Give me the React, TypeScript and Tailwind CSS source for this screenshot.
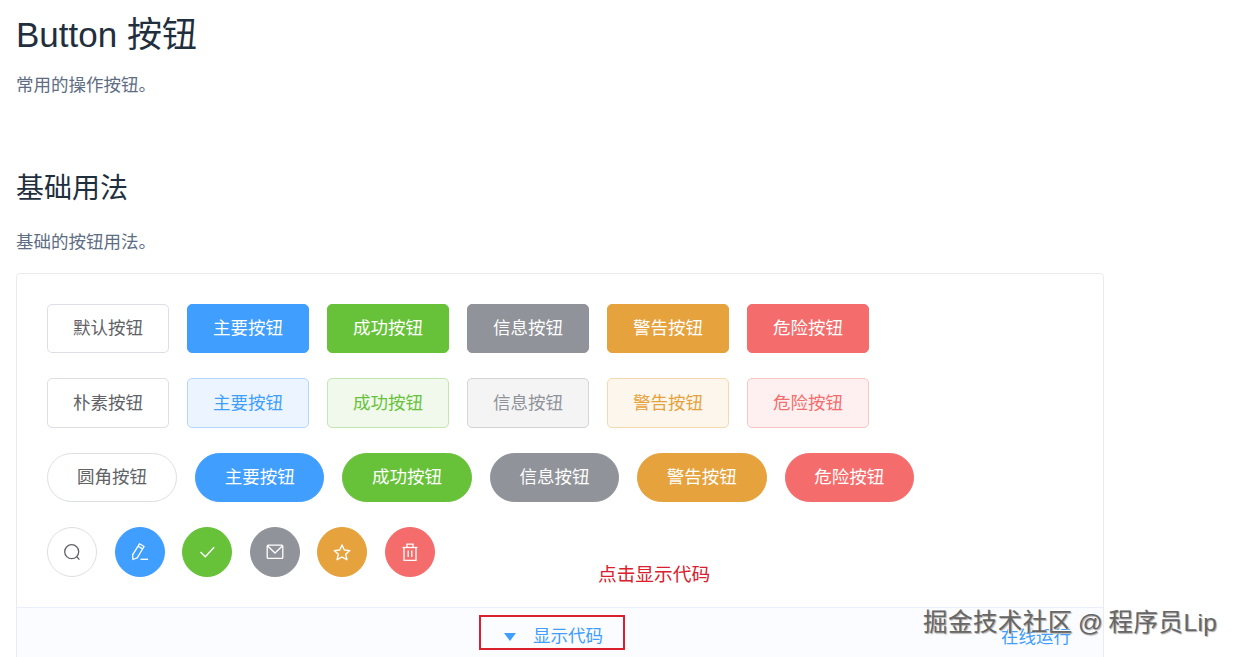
import type { ReactNode } from 'react'

const font = "font-['Liberation_Sans','Noto_Sans_CJK_SC',sans-serif]"

const base =
  'flex items-center justify-center border pt-px text-[17.5px] leading-none'

const solid = [
  { label: '主要按钮', cls: 'border-[#409eff] bg-[#409eff] text-white' },
  { label: '成功按钮', cls: 'border-[#67c23a] bg-[#67c23a] text-white' },
  { label: '信息按钮', cls: 'border-[#909399] bg-[#909399] text-white' },
  { label: '警告按钮', cls: 'border-[#e6a23c] bg-[#e6a23c] text-white' },
  { label: '危险按钮', cls: 'border-[#f56c6c] bg-[#f56c6c] text-white' },
]

const plain = [
  { label: '主要按钮', cls: 'border-[#b3d8ff] bg-[#ecf5ff] text-[#409eff]' },
  { label: '成功按钮', cls: 'border-[#c2e7b0] bg-[#f0f9eb] text-[#67c23a]' },
  { label: '信息按钮', cls: 'border-[#d3d4d6] bg-[#f4f4f5] text-[#909399]' },
  { label: '警告按钮', cls: 'border-[#f5dab1] bg-[#fdf6ec] text-[#e6a23c]' },
  { label: '危险按钮', cls: 'border-[#fbc4c4] bg-[#fef0f0] text-[#f56c6c]' },
]

function Circle({ cls, children }: { cls: string; children: ReactNode }) {
  return (
    <div className={`flex h-[50px] w-[50px] items-center justify-center rounded-full border ${cls}`}>
      {children}
    </div>
  )
}

export default function App() {
  return (
    <div className={`relative h-[657px] w-[1240px] overflow-hidden bg-white pl-4 ${font}`}>
      {/* Page Header */}
      <h1 className="pt-[14px] text-[35px] leading-[42px] font-normal text-[#1f2f3d]">Button 按钮</h1>
      <p className="mt-[17px] text-[17.5px] leading-[24px] text-[#5e6d82]">常用的操作按钮。</p>
      <h2 className="mt-[74px] text-[28px] leading-[36px] font-normal text-[#1f2f3d]">基础用法</h2>
      <p className="mt-[23px] text-[17.5px] leading-[24px] text-[#5e6d82]">基础的按钮用法。</p>

      {/* Demo card */}
      <div className="mt-[19px] w-[1088px] rounded-[4px] border border-[#ebebeb]">
        <div className="flex flex-col gap-[25px] px-[30px] pt-[30px] pb-[30px]">
          <div className="flex gap-[18px]">
            <div className={`${base} h-[49px] w-[122px] rounded-[5px] border-[#dcdfe6] bg-white text-[#606266]`}>默认按钮</div>
            {solid.map((b) => (
              <div key={b.label} className={`${base} h-[49px] w-[122px] rounded-[5px] ${b.cls}`}>{b.label}</div>
            ))}
          </div>
          <div className="flex gap-[18px]">
            <div className={`${base} h-[50px] w-[122px] rounded-[5px] border-[#dcdfe6] bg-white text-[#606266]`}>朴素按钮</div>
            {plain.map((b) => (
              <div key={b.label} className={`${base} h-[50px] w-[122px] rounded-[5px] ${b.cls}`}>{b.label}</div>
            ))}
          </div>
          <div className="flex gap-[18px]">
            <div className={`${base} h-[49px] w-[130px] rounded-[25px] border-[#dcdfe6] bg-white text-[#606266]`}>圆角按钮</div>
            {solid.map((b) => (
              <div key={b.label} className={`${base} h-[49px] w-[129.4px] rounded-[25px] ${b.cls}`}>{b.label}</div>
            ))}
          </div>
          <div className="flex gap-[17.5px]">
            <Circle cls="border-[#dcdfe6] bg-white">
              <svg width="18" height="18" viewBox="0 0 18 18" fill="none" stroke="#606266" strokeWidth="1.3">
                <circle cx="8.7" cy="8.7" r="7" />
                <path d="M13.8 13.8l2.6 2.8" />
              </svg>
            </Circle>
            <Circle cls="border-[#409eff] bg-[#409eff]">
              <svg width="18" height="18" viewBox="0 0 18 18" fill="none" stroke="white" strokeWidth="1.3" strokeLinejoin="round">
                <path d="M8.5 0.8l4.6 2.7-6.9 11.4-4.3 1.6-.3-4.6z" />
                <path d="M7 3.2l4.7 2.7" />
                <path d="M9.5 16.3h7.6" />
              </svg>
            </Circle>
            <Circle cls="border-[#67c23a] bg-[#67c23a]">
              <svg width="18" height="18" viewBox="0 0 18 18" fill="none" stroke="white" strokeWidth="1.4">
                <path d="M2.5 9l4.8 4.8 8.9-9.5" />
              </svg>
            </Circle>
            <Circle cls="border-[#909399] bg-[#909399]">
              <svg width="18" height="18" viewBox="0 0 18 18" fill="none" stroke="white" strokeWidth="1.3">
                <rect x="1.2" y="2.2" width="15.6" height="13.2" rx="1" />
                <path d="M1.5 2.8L9 10l7.5-7.2" />
              </svg>
            </Circle>
            <Circle cls="border-[#e6a23c] bg-[#e6a23c]">
              <svg width="18" height="18" viewBox="0 0 18 18" fill="none" stroke="white" strokeWidth="1.4" strokeLinejoin="round">
                <path d="M9 2l2.3 5 5.5.6-4.1 3.7 1.2 5.4L9 14l-4.9 2.7 1.2-5.4L1.2 7.6l5.5-.6z" />
              </svg>
            </Circle>
            <Circle cls="border-[#f56c6c] bg-[#f56c6c]">
              <svg width="18" height="18" viewBox="0 0 18 18" fill="none" stroke="white" strokeWidth="1.3">
                <path d="M1.5 4.5h15" />
                <path d="M6 4.5V1.2h6v3.3" />
                <path d="M3 4.5v12.8h12V4.5" />
                <path d="M7.2 7.5v6.5M10.8 7.5v6.5" />
              </svg>
            </Circle>
          </div>
        </div>

        {/* Card footer */}
        <div className="relative h-[60px] border-t border-[#eaeefb] bg-[#fafcff]">
          <div className="flex h-[57px] items-center justify-center pr-[13px] text-[17.5px] text-[#409eff]">
            <span className="mr-[17px] h-0 w-0 border-x-[6px] border-t-[8px] border-x-transparent border-t-[#409eff]" />
            显示代码
          </div>
          <span className="absolute top-[17px] right-[32px] text-[17.5px] leading-[24px] text-[#409eff]">在线运行</span>
        </div>
      </div>

      {/* Annotation overlays */}
      <span className="absolute top-[563px] left-[598px] text-[18.7px] leading-[24px] text-[#d9202c]">点击显示代码</span>
      <div className="absolute top-[615px] left-[479px] h-[35px] w-[146px] border-2 border-[#d9202c]" />
      <span className="absolute top-[607px] left-[923px] text-[24.5px] leading-[32px] tracking-[0.45px] text-[#666] [word-spacing:-2px] [text-shadow:1px_1px_1px_#aaa,-1px_-1px_0_#fff]">
        掘金技术社区 @ 程序员Lip
      </span>
    </div>
  )
}
